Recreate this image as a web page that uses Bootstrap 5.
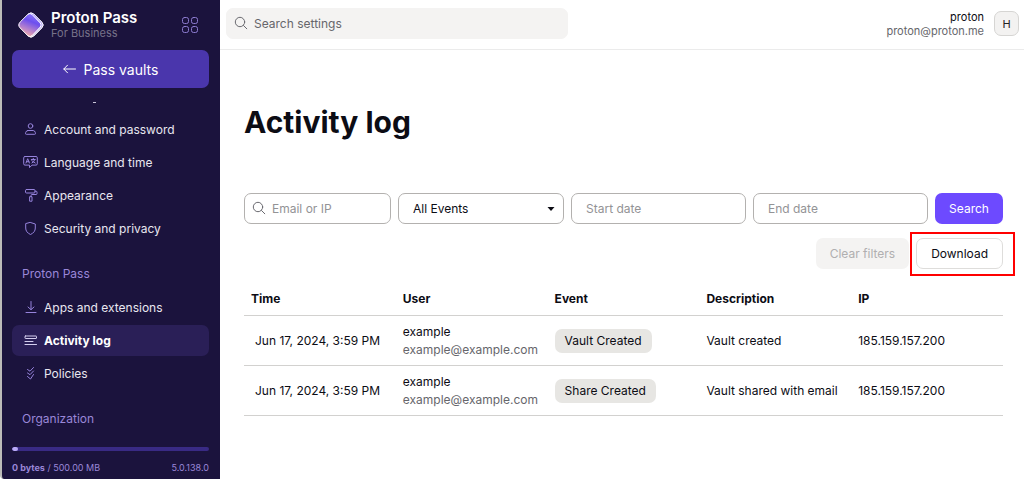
<!DOCTYPE html>
<html lang="en">
<head>
<meta charset="utf-8">
<meta name="viewport" content="width=device-width, initial-scale=1">
<title>Activity log - Proton Pass</title>
<link href="https://cdn.jsdelivr.net/npm/bootstrap@5.3.0/dist/css/bootstrap.min.css" rel="stylesheet">
<style>
body{font-family:Inter,"Liberation Sans",sans-serif;font-size:12px;line-height:18px;color:#0c0c14;background:#fff}
svg{flex:none;fill:none;stroke:currentColor;stroke-linecap:round;stroke-linejoin:round}
.sidebar{width:220px;padding:0 11px 0 10px;background:#1b133d;border-left:2px solid #bcbbb9;border-bottom-left-radius:4px;color:#9a87d8}
.brand{height:50px;padding:0 10px 0 5px;gap:6px;color:#fff}
.brand-name{font-size:15px;font-weight:600;line-height:16px}
.brand-sub{font-size:11px;line-height:14px;color:#77728a}
.apps{color:#8c7bd0}
.vaults{height:38px;border-radius:7px;background:#4a36ac;color:#fff;font-size:14px;padding:0}
.vaults:hover{background:#533fba;color:#fff}
.tail{width:3px;height:1px;margin:14px 0 11px 81px;background:#c9c5d8}
.side-link{height:31px;margin-bottom:2px;padding:0 11px;gap:6px;border-radius:7px;color:#e9e7f0;text-decoration:none}
.side-link svg{color:#9683dc}
.side-link.active{background:#2a1f57;color:#fff;font-weight:700}
.side-link.active svg{color:#d5cff0}
.side-title{height:31px;padding:0 10px;font-size:12px;margin:15px 0 2px;font-weight:400;display:flex;align-items:center}
.quota{height:4px;background:#392a84;border-radius:4px}
.quota .progress-bar{background:#b9a9f5;border-radius:4px}
.quota-text{font-size:9px;line-height:14px;padding:10px 0 4px}
.topbar{height:50px;padding:0 5px 2px 6px;border-bottom:1px solid #ebebeb}
.find{width:342px}
.field{position:relative}
.field svg{position:absolute;left:8px;top:8px;color:#6a6a70}
.form-control,.form-select{height:31px;border-radius:7px;border-color:#b3b1af;font-size:12px;line-height:18px;padding:0 14px;color:#0c0c14}
.form-control::placeholder{color:#939396}
.field .form-control{padding-left:27px}
.find .form-control{background:#f4f3f2;border-color:#f4f3f2}
.find .form-control::placeholder{color:#66666b}
.form-select{background-image:url("data:image/svg+xml,%3Csvg xmlns='http://www.w3.org/2000/svg' viewBox='0 0 8 4'%3E%3Cpath d='M.5 0h7L4 4z' fill='%230c0c14'/%3E%3C/svg%3E");background-size:8px 4px;background-position:right 8px center}
.account{gap:10px}
.user{font-size:11px;line-height:14px}
.soft{color:#66666b}
.avatar{width:25px;height:25px;border-radius:7px;background:#f3f2f1;border:1px solid #d6d5d3;font-size:11px;padding:0;color:#222}
.content{padding:54px 21px 24px 24px}
h1{font-size:30px;line-height:36px;font-weight:700;margin-bottom:53px}
.filters{display:grid;grid-template-columns:147fr 166fr 175fr 175fr 68px;gap:7px}
.actions{margin-top:14px;gap:7px}
.act{height:31px;border-radius:7px;font-size:12px;line-height:18px;padding:0 14px}
.act-main{background:#6d4aff;color:#fff;border:0}
.act-line{background:#fff;border:1px solid #dedddb;color:#0c0c14}
.act.act-off{background:#f4f3f2;border:0;color:#b0afb0;opacity:1}
.marked{position:relative}
.marked::after{content:"";position:absolute;inset:-6px -12px -7px -6px;border:2px solid #f00;pointer-events:none}
.log{table-layout:fixed;margin:13px 0 0}
.log>:not(caption)>*>*{padding:7px 0 6px 7px;vertical-align:middle;border-bottom:1px solid #d2d1cf;white-space:nowrap;color:#0c0c14}
.log>thead>tr>th{padding-top:8px;padding-bottom:7px}
.log>tbody>tr>td:first-child{padding-left:11px}
.log td .soft{color:#66666b}
.tag{display:inline-block;background:#e7e6e3;border-radius:7px;padding:3px 10px}
</style>
</head>
<body>
<div class="d-flex min-vh-100">
<aside class="sidebar d-flex flex-column flex-shrink-0">
<div class="brand d-flex align-items-center">
<svg width="28" height="28" viewBox="0 0 28 28" stroke="none" aria-hidden="true"><defs><linearGradient id="g1" x1="0" y1="0" x2="0" y2="1"><stop offset="0" stop-color="#9b86ff"/><stop offset="1" stop-color="#dcd6ee"/></linearGradient><linearGradient id="g2" x1=".7" y1="0" x2=".3" y2="1"><stop offset="0" stop-color="#8f7cff"/><stop offset=".35" stop-color="#6d4fee"/><stop offset=".7" stop-color="#b883cb"/><stop offset="1" stop-color="#ffb5a4"/></linearGradient></defs><path fill="url(#g1)" d="M11.200 3Q14 .4 16.800 3l8 8q3 3 0 6l-8 8q-2.800 2.600-5.600 0L8 20z"/><path fill="url(#g2)" d="M11 3.200q2-1.700 4 .2l8.200 8.500q1.900 2.100 0 4.200l-7.900 8.300q-2.100 2.300-4.500.3L3.200 17q-3-3 0-6z"/></svg>
<div><div class="brand-name">Proton Pass</div><div class="brand-sub">For Business</div></div>
<button class="btn apps p-0 border-0 ms-auto lh-1" type="button" aria-label="Apps"><svg width="18" height="18" viewBox="0 0 18 18"><rect x="1.500" y="1.500" width="6" height="6" rx="2"/><rect x="10.500" y="1.500" width="6" height="6" rx="2"/><rect x="1.500" y="10.500" width="6" height="6" rx="2"/><rect x="10.500" y="10.500" width="6" height="6" rx="2"/></svg></button>
</div>
<button class="btn vaults d-flex align-items-center justify-content-center gap-2" type="button"><svg width="13" height="10" viewBox="0 0 13 10"><path d="M12.500 5H.8M4.500 1.200.8 5l3.700 3.800"/></svg>Pass vaults</button>
<nav>
<div class="tail"></div>
<a href="#" class="side-link d-flex align-items-center"><svg width="15" height="15" viewBox="0 0 15 15"><circle cx="7.500" cy="4" r="2.300"/><path d="M4.800 8.500h5.400q1.500 0 2.100 2l.2.800q.2 1-.8 1H3.300q-1 0-.8-1l.2-.8q.6-2 2.100-2z"/></svg>Account and password</a>
<a href="#" class="side-link d-flex align-items-center"><svg width="15" height="15" viewBox="0 0 15 15"><path d="M2 1.500h11q1.300 0 1.300 1.300v6q0 1.300-1.300 1.300H9l-2.500 2.500V10.100H2Q.7 10.100.7 8.800v-6Q.7 1.500 2 1.500z"/><path d="M3 8l1.700-4.300L6.400 8M3.500 6.700h2.400M8.300 4.500h4M10.300 3.400v1.100M9 8q2.400-1 2.700-3.500M8.800 5.700 12.200 8"/></svg>Language and time</a>
<a href="#" class="side-link d-flex align-items-center"><svg width="15" height="15" viewBox="0 0 15 15"><rect x="2.500" y="1.500" width="9.500" height="3.500" rx="1"/><path d="M12 3.200h1q1 0 1 1v1.300q0 1-1 1H9q-1 0-1 1v1M7 8.700h2v4.500H7z"/></svg>Appearance</a>
<a href="#" class="side-link d-flex align-items-center"><svg width="15" height="15" viewBox="0 0 15 15"><path d="M7.500 1.500 12.300 3v4q0 4.300-4.800 6.500Q2.700 11.300 2.700 7V3z"/></svg>Security and privacy</a>
<h2 class="side-title">Proton Pass</h2>
<a href="#" class="side-link d-flex align-items-center"><svg width="15" height="15" viewBox="0 0 15 15"><path d="M8 1.500v8M5 7l3 2.700L11 7M3 12.500h10"/></svg>Apps and extensions</a>
<a href="#" class="side-link active d-flex align-items-center" aria-current="page"><svg width="15" height="15" viewBox="0 0 15 15"><path d="M2.500 3h10.500q.5 0 .5.500v1.500q0 .5-.5.500H2.500Q2 5.500 2 5V3.500Q2 3 2.500 3zM2 8.500h8M2 11.500h11.500"/></svg>Activity log</a>
<a href="#" class="side-link d-flex align-items-center"><svg width="15" height="15" viewBox="0 0 15 15"><path d="M4.500 3.500 7 5.200l3.500-3.700M4.500 7 7 8.700 10.500 5M4.500 10.500 7.500 13l3-4.500"/></svg>Policies</a>
<h2 class="side-title">Organization</h2>
</nav>
<div class="mt-auto">
<div class="progress quota" role="progressbar" aria-label="Storage" aria-valuenow="3" aria-valuemin="0" aria-valuemax="100"><div class="progress-bar" style="width:3%"></div></div>
<div class="quota-text d-flex justify-content-between"><span><b>0 bytes</b> / 500.00 MB</span><span>5.0.138.0</span></div>
</div>
</aside>
<div class="flex-grow-1">
<header class="topbar d-flex align-items-center justify-content-between">
<div class="find field"><svg width="14" height="14" viewBox="0 0 14 14"><circle cx="6" cy="6" r="4.700"/><path d="m9.500 9.500 3.300 3.300"/></svg><input class="form-control" type="search" placeholder="Search settings" aria-label="Search settings"></div>
<div class="account d-flex align-items-center"><div class="user text-end"><div>proton</div><div class="soft">proton@proton.me</div></div><button class="avatar" type="button">H</button></div>
</header>
<main class="content">
<h1>Activity log</h1>
<form class="filters">
<div class="field"><svg width="14" height="14" viewBox="0 0 14 14"><circle cx="6" cy="6" r="4.700"/><path d="m9.500 9.500 3.300 3.300"/></svg><input class="form-control" type="text" placeholder="Email or IP" aria-label="Email or IP"></div>
<select class="form-select" aria-label="Event"><option>All Events</option></select>
<input class="form-control" type="text" placeholder="Start date" aria-label="Start date">
<input class="form-control" type="text" placeholder="End date" aria-label="End date">
<button class="btn act act-main" type="button">Search</button>
</form>
<div class="d-flex justify-content-end actions"><button class="btn act act-off" type="button" disabled>Clear filters</button><div class="marked"><button class="btn act act-line d-block" type="button">Download</button></div></div>
<table class="table log">
<thead><tr><th>Time</th><th>User</th><th>Event</th><th>Description</th><th>IP</th></tr></thead>
<tbody>
<tr><td>Jun 17, 2024, 3:59 PM</td><td>example<div class="soft">example@example.com</div></td><td><span class="tag">Vault Created</span></td><td>Vault created</td><td>185.159.157.200</td></tr>
<tr><td>Jun 17, 2024, 3:59 PM</td><td>example<div class="soft">example@example.com</div></td><td><span class="tag">Share Created</span></td><td>Vault shared with email</td><td>185.159.157.200</td></tr>
</tbody>
</table>
</main>
</div>
</div>
<script src="https://cdn.jsdelivr.net/npm/bootstrap@5.3.0/dist/js/bootstrap.bundle.min.js"></script>
</body>
</html>
